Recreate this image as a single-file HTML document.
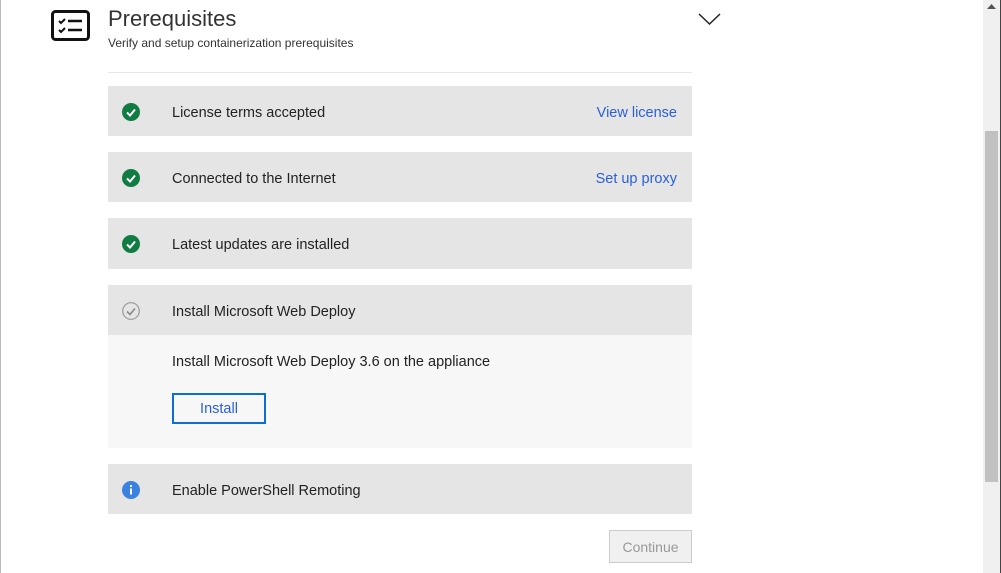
<!DOCTYPE html>
<html><head><meta charset="utf-8"><style>
body{margin:0;width:1001px;height:573px;background:#fff;position:relative;overflow:hidden;font-family:"Segoe UI","Liberation Sans",sans-serif;color:#222}
.a{position:absolute}
.row{position:absolute;left:108px;width:584px;background:#e5e5e5;height:50px}
.row .t{position:absolute;left:64px;top:2px;line-height:50px;font-size:14.5px;color:#222}
.row .l{position:absolute;right:15px;top:2px;line-height:50px;font-size:14.5px;color:#2b5fd9}
.row svg{position:absolute;left:14px;top:17px}
</style></head><body>
<div class="a" style="left:0;top:0;width:1px;height:573px;background:#bbb"></div>
<svg class="a" style="left:51px;top:10px" width="40" height="32" viewBox="0 0 40 32"><rect x="1.5" y="1.5" width="36" height="28" rx="3" fill="none" stroke="#111" stroke-width="3"/><path d="M8 11l2 2 4-4M8 20l2 2 4-4" fill="none" stroke="#111" stroke-width="2"/><path d="M17 11h14M17 20h14" stroke="#111" stroke-width="2.5"/></svg>
<div class="a" style="left:108px;top:6px;font-size:22px;color:#333">Prerequisites</div>
<div class="a" style="left:108px;top:36px;font-size:12px;color:#333">Verify and setup containerization prerequisites</div>
<svg class="a" style="left:698px;top:12px" width="24" height="14"><path d="M1 2l10.5 10L22 2" fill="none" stroke="#222" stroke-width="1.5"/></svg>
<div class="a" style="left:108px;top:72px;width:584px;height:1px;background:#e6e6e6"></div>
<div class="row" style="top:86px"><svg width="18" height="18"><circle cx="9" cy="9" r="9" fill="#107c41"/><path d="M5 9.5l3 3 5-6" fill="none" stroke="#fff" stroke-width="2"/></svg><div class="t">License terms accepted</div><div class="l">View license</div></div>
<div class="row" style="top:152px"><svg width="18" height="18"><circle cx="9" cy="9" r="9" fill="#107c41"/><path d="M5 9.5l3 3 5-6" fill="none" stroke="#fff" stroke-width="2"/></svg><div class="t">Connected to the Internet</div><div class="l">Set up proxy</div></div>
<div class="row" style="top:218px;height:51px"><svg width="18" height="18"><circle cx="9" cy="9" r="9" fill="#107c41"/><path d="M5 9.5l3 3 5-6" fill="none" stroke="#fff" stroke-width="2"/></svg><div class="t">Latest updates are installed</div></div>
<div class="row" style="top:285px"><svg width="18" height="18"><circle cx="9" cy="9" r="8.3" fill="none" stroke="#999" stroke-width="1.2"/><path d="M5 9.5l3 3 5-6" fill="none" stroke="#888" stroke-width="1.6"/></svg><div class="t">Install Microsoft Web Deploy</div></div>
<div class="a" style="left:108px;top:335px;width:584px;height:113px;background:#f7f7f7"></div>
<div class="a" style="left:172px;top:354px;font-size:14.5px">Install Microsoft Web Deploy 3.6 on the appliance</div>
<div class="a" style="left:172px;top:393px;width:90px;height:27px;border:2px solid #0a6fd1;text-align:center;line-height:29px;font-size:14.5px;color:#2b5fd9">Install</div>
<div class="row" style="top:464px"><svg width="18" height="18"><circle cx="9" cy="9" r="9" fill="#3b82e0"/><rect x="8" y="7.5" width="2" height="6" fill="#fff"/><rect x="8" y="4" width="2" height="2" fill="#fff"/></svg><div class="t">Enable PowerShell Remoting</div></div>
<div class="a" style="left:609px;top:530px;width:81px;height:31px;border:1px solid #ccc;background:#f0f0f0;text-align:center;line-height:33px;font-size:14px;color:#999">Continue</div>
<div class="a" style="left:983px;top:0;width:17px;height:573px;background:#f0f0f0"></div>
<div class="a" style="left:985px;top:131px;width:13px;height:351px;background:#c1c1c1"></div>
<svg class="a" style="left:987px;top:4px" width="9" height="6"><path d="M0 5l4.5-5 4.5 5z" fill="#555"/></svg>
<div class="a" style="left:1000px;top:0;width:1px;height:573px;background:#444"></div>
</body></html>
